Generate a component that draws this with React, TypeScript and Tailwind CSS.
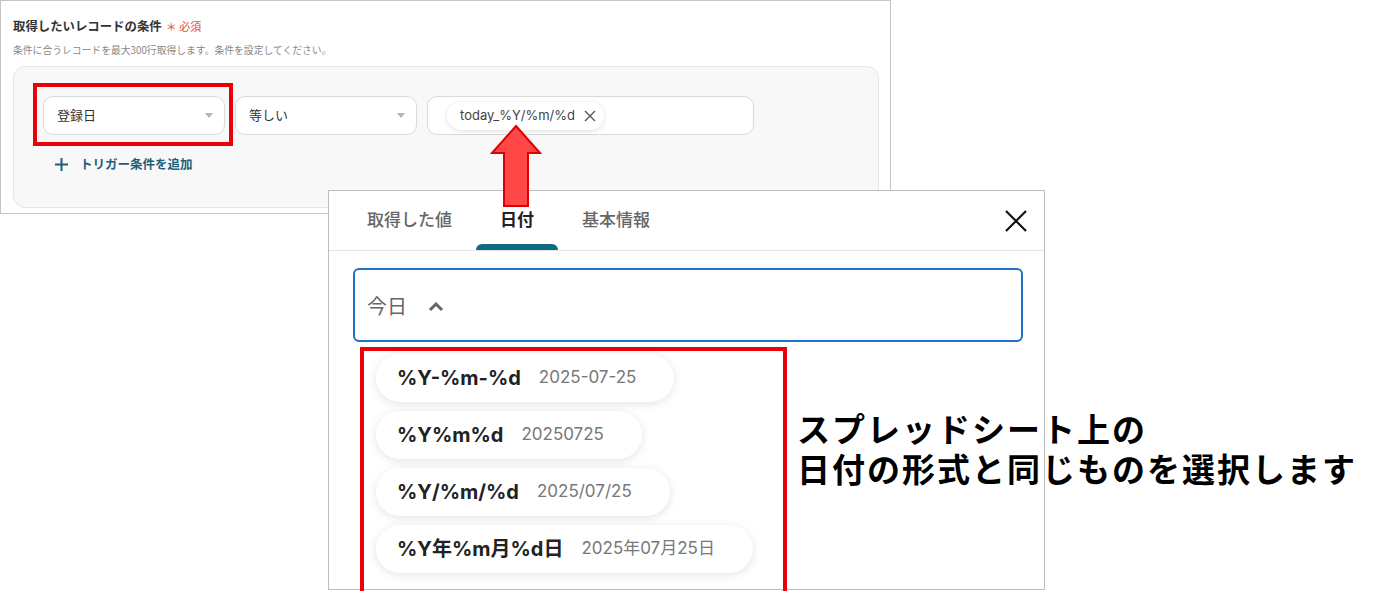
import React from "react";

const formats = [
  { pattern: "%Y-%m-%d", sample: "2025-07-25" },
  { pattern: "%Y%m%d", sample: "20250725" },
  { pattern: "%Y/%m/%d", sample: "2025/07/25" },
  { pattern: "%Y年%m月%d日", sample: "2025年07月25日" },
];

function Caret() {
  return (
    <svg width="8" height="5" viewBox="0 0 8 5" className="shrink-0">
      <path d="M0 0h8L4 5z" fill="#b5b5b5" />
    </svg>
  );
}

function SelectBox({ label }: { label: string }) {
  return (
    <div className="w-[182px] h-[39px] rounded-[10px] border border-[#d9d9d9] bg-white pl-[13px] pr-[11px] flex items-center justify-between text-[13px] text-[#333]">
      <span>{label}</span>
      <Caret />
    </div>
  );
}

export default function App() {
  return (
    <div className="relative w-[1376px] h-[591px] overflow-hidden bg-white font-['Inter','Noto_Sans_CJK_JP',sans-serif]">
      {/* 条件パネル */}
      <section className="w-[891px] h-[214px] border border-[#c4c4c4] pt-[15px] px-[12px]">
        <h2 className="flex items-center gap-[4px] text-[12.4px] font-bold leading-[20px] text-[#333] font-['Noto_Sans_CJK_JP',sans-serif]">
          取得したいレコードの条件
          <span className="text-[11px] font-normal text-[#e5484d]">＊ 必須</span>
        </h2>
        <p className="mt-[6px] text-[9.8px] leading-[16px] text-[#888] font-['Noto_Sans_CJK_JP',sans-serif]">
          条件に合うレコードを最大300行取得します。条件を設定してください。
        </p>
        <div className="mt-[8px] w-[866px] h-[142px] rounded-[12px] border border-[#e6e6e6] bg-[#f8f8f8] pt-[29px] pl-[29px]">
          <div className="flex gap-[10px]">
            <div className="relative">
              <SelectBox label="登録日" />
              <div className="absolute -left-[10px] -top-[13px] w-[200px] h-[63px] border-[4px] border-[#e8000b]" />
            </div>
            <SelectBox label="等しい" />
            <div className="w-[327px] h-[39px] rounded-[10px] border border-[#d9d9d9] bg-white pl-[19px] flex items-center">
              <div className="h-[28px] rounded-full bg-white shadow-[0_1px_5px_rgba(0,0,0,0.13)] pl-[13px] pr-[8px] flex items-center gap-[9px] text-[13px] text-[#444]">
                today_%Y/%m/%d
                <svg width="12" height="12" viewBox="0 0 12 12">
                  <path d="M1 1l10 10M11 1L1 11" stroke="#555" strokeWidth="1.4" />
                </svg>
              </div>
            </div>
          </div>
          <button className="mt-[19px] ml-[12px] flex items-center gap-[12px] text-[12.5px] font-bold leading-[20px] text-[#1f5f77] font-['Noto_Sans_CJK_JP',sans-serif]">
            <svg width="13" height="13" viewBox="0 0 13 13">
              <path d="M6.5 0v13M0 6.5h13" stroke="#1f5f77" strokeWidth="2" />
            </svg>
            トリガー条件を追加
          </button>
        </div>
      </section>

      {/* 変数選択ポップアップ */}
      <div className="absolute left-[328px] top-[190px] w-[717px] h-[400px] border border-[#bdbdbd] bg-white">
        <div className="h-[60px] border-b border-[#e3e3e3] pl-[14px] flex font-['Noto_Sans_CJK_JP',sans-serif]">
          {["取得した値", "日付", "基本情報"].map((t, i) => (
            <div key={t} className="flex flex-col">
              <div
                className={
                  i === 1
                    ? "flex-1 px-[24px] pt-[3px] flex items-center text-[17px] font-bold text-[#222]"
                    : "flex-1 px-[24px] pt-[3px] flex items-center text-[17px] font-medium text-[#666]"
                }
              >
                {t}
              </div>
              <div className={i === 1 ? "h-[6px] rounded-t-[6px] bg-[#0e6a80]" : "h-[6px]"} />
            </div>
          ))}
          <svg width="24" height="24" viewBox="0 0 24 24" className="ml-auto mr-[16px] self-center">
            <path d="M2 2l20 20M22 2L2 22" stroke="#111" strokeWidth="2.2" />
          </svg>
        </div>

        <div className="px-[24px] pt-[17px]">
          <div className="w-[670px] h-[74px] rounded-[6px] border-2 border-[#1f6fc5] pl-[12px] pt-[2px] flex items-center gap-[21px]">
            <span className="text-[20px] text-[#666] font-['Noto_Sans_CJK_JP',sans-serif]">今日</span>
            <svg width="16" height="11" viewBox="0 0 16 11">
              <path d="M2 9l6-6 6 6" stroke="#666" strokeWidth="3" fill="none" />
            </svg>
          </div>

          <ul className="mt-[12px] ml-[23px] flex flex-col items-start gap-[9px]">
            {formats.map((f) => (
              <li
                key={f.pattern}
                className="h-[48px] rounded-full bg-white shadow-[0_2px_10px_rgba(0,0,0,0.11)] pl-[21px] pr-[38px] flex items-center gap-[18px]"
              >
                <span className="text-[20px] font-bold text-[#222]">{f.pattern}</span>
                <span className="text-[17px] text-[#777]">{f.sample}</span>
              </li>
            ))}
          </ul>
        </div>

        <div className="absolute left-[31px] top-[156px] w-[427px] h-[250px] border-[4px] border-[#e8000b]" />
      </div>

      {/* 注釈 */}
      <svg width="56" height="90" viewBox="0 0 56 90" className="absolute left-[488px] top-[122px]">
        <path d="M28 4L52 31H40V84H16V31H4Z" fill="#ff4747" stroke="#e00000" strokeWidth="2" />
      </svg>
      <p className="absolute left-[797px] top-[408px] text-[33px] font-bold leading-[40px] tracking-[2px] text-black font-['Noto_Sans_CJK_JP',sans-serif]">
        スプレッドシート上の
        <br />
        日付の形式と同じものを選択します
      </p>
    </div>
  );
}
